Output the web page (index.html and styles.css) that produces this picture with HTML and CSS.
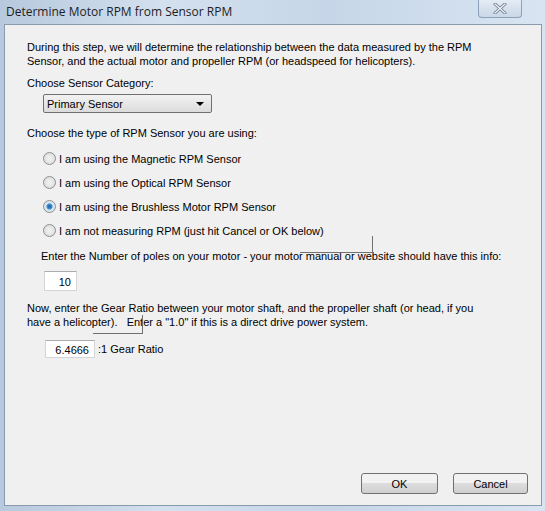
FILE: index.html
```html
<!DOCTYPE html>
<html>
<head>
	<title>Determine Motor RPM from Sensor RPM</title>
	<link rel="stylesheet" href="styles.css">
</head>
<body>
	<div class="window">
		<div class="titlebar">
			<span class="title">Determine Motor RPM from Sensor RPM</span>
			<div class="close">
				<svg width="14" height="11" viewBox="0 0 14 11">
					<path d="M2 1 L12 10 M12 1 L2 10" stroke="#6b7a8c" stroke-width="3" stroke-linecap="round"/>
					<path d="M2 1 L12 10 M12 1 L2 10" stroke="#f4f7fb" stroke-width="1.2" stroke-linecap="round"/>
				</svg>
			</div>
		</div>
		<div class="panel">
			<p class="intro">During this step, we will determine the relationship between the data measured by the RPM Sensor, and the actual motor and propeller RPM (or headspeed for helicopters).</p>

			<p class="label">Choose Sensor Category:</p>
			<div class="select">
				<span>Primary Sensor</span>
				<span class="arrow"></span>
			</div>

			<p class="label second">Choose the type of RPM Sensor you are using:</p>
			<div class="radios">
				<div class="radio"><span class="dot"></span>I am using the Magnetic RPM Sensor</div>
				<div class="radio"><span class="dot"></span>I am using the Optical RPM Sensor</div>
				<div class="radio"><span class="dot checked"></span>I am using the Brushless Motor RPM Sensor</div>
				<div class="radio"><span class="dot"></span>I am not measuring RPM (just hit Cancel or OK below)</div>
			</div>

			<p class="poles">Enter the Number of poles on your motor - your motor manual or website should have this info:</p>
			<div class="field poles-field">10</div>

			<p class="gear">Now, enter the Gear Ratio between your motor shaft, and the propeller shaft (or head, if you have a helicopter).&nbsp;&nbsp; Enter a "1.0" if this is a direct drive power system.</p>
			<div class="ratio-row">
				<div class="field ratio-field">6.4666</div>
				<span>:1 Gear Ratio</span>
			</div>

			<div class="buttons">
				<button class="ok">OK</button>
				<button class="cancel">Cancel</button>
			</div>

			<div class="ghost ghost-one"></div>
			<div class="ghost ghost-two"></div>
		</div>
	</div>
</body>
</html>
```

FILE: styles.css
```css
body {
  margin: 0;
  font-family: "Liberation Sans", Arial, sans-serif;
  font-size: 11px;
  color: #000;
}

.window {
  width: 545px;
  height: 511px;
  box-sizing: border-box;
  padding: 0 3px 5px 4px;
  background: linear-gradient(to right, #b7c9de, #d3e0ee 30%, #c6d6e8 60%, #d8e4f1);
  display: flex;
  flex-direction: column;
}

.titlebar {
  height: 24px;
  display: flex;
  align-items: flex-start;
  justify-content: space-between;
}

.title {
  font-family: "Open Sans", sans-serif;
  font-size: 12px;
  margin: 3px 0 0 2px;
  color: #1e1e1e;
}

.close {
  width: 42px;
  height: 17px;
  margin-right: 20px;
  border: 1px solid #8da1b8;
  border-top: none;
  border-radius: 0 0 4px 4px;
  background: linear-gradient(#e4ecf5, #c9d7e7);
  display: flex;
  align-items: center;
  justify-content: center;
}

.panel {
  position: relative;
  flex: 1;
  background: #f0f0f0;
  border: 1px solid #8a9aad;
  padding: 15px 0 0 22px;
}

p {
  margin: 0;
}

.intro {
  line-height: 14px;
  width: 482px;
}

.label {
  margin-top: 9px;
}

.label.second {
  margin-top: 14px;
}

.select {
  margin: 5px 0 0 16px;
  width: 169px;
  height: 19px;
  box-sizing: border-box;
  border: 1px solid #707070;
  border-radius: 2px;
  background: linear-gradient(#f2f2f2, #dcdcdc);
  display: flex;
  align-items: center;
  justify-content: space-between;
  padding: 0 7px 0 3px;
}

.arrow {
  width: 0;
  height: 0;
  border-left: 4px solid transparent;
  border-right: 4px solid transparent;
  border-top: 4px solid #000;
}

.radios {
  margin: 13px 0 0 16px;
  display: flex;
  flex-direction: column;
  gap: 11px;
}

.radio {
  display: flex;
  align-items: center;
  height: 13px;
}

.dot {
  width: 11px;
  height: 11px;
  border: 1px solid #8e8f8f;
  border-radius: 50%;
  background: radial-gradient(#f4f4f4, #d6d6d6);
  margin-right: 3px;
  box-sizing: content-box;
}

.dot.checked {
  background: radial-gradient(circle, #1d5fa0 0, #3b8fd0 2.5px, #cfe3f3 3.5px, #e6e6e6 6px);
}

.poles {
  margin: 13px 0 0 14px;
}

.field {
  background: #fff;
  border: 1px solid #d5d5d5;
  border-top-color: #abadb3;
  height: 18px;
  box-sizing: border-box;
  text-align: right;
  padding: 3px 5px 0 0;
}

.poles-field {
  margin: 9px 0 0 17px;
  width: 33px;
  height: 20px;
  padding-top: 4px;
}

.gear {
  margin-top: 10px;
  line-height: 14px;
  width: 462px;
}

.ratio-row {
  margin: 11px 0 0 18px;
  display: flex;
  align-items: center;
  gap: 3px;
}

.ratio-field {
  width: 50px;
}

.buttons {
  position: absolute;
  right: 13px;
  bottom: 11px;
  display: flex;
  gap: 15px;
}

button {
  height: 21px;
  font-family: "Liberation Sans", Arial, sans-serif;
  font-size: 11px;
  border: 1px solid #707070;
  border-radius: 3px;
  background: linear-gradient(#f2f2f2 50%, #dddddd 50%, #cfcfcf);
}

.ok {
  width: 77px;
}

.cancel {
  width: 75px;
}

.ghost {
  position: absolute;
  border-right: 1px solid #707070;
  border-bottom: 1px solid #707070;
}

.ghost-one {
  left: 295px;
  top: 211px;
  width: 72px;
  height: 16px;
}

.ghost-two {
  left: 88px;
  top: 290px;
  width: 49px;
  height: 18px;
}
```
